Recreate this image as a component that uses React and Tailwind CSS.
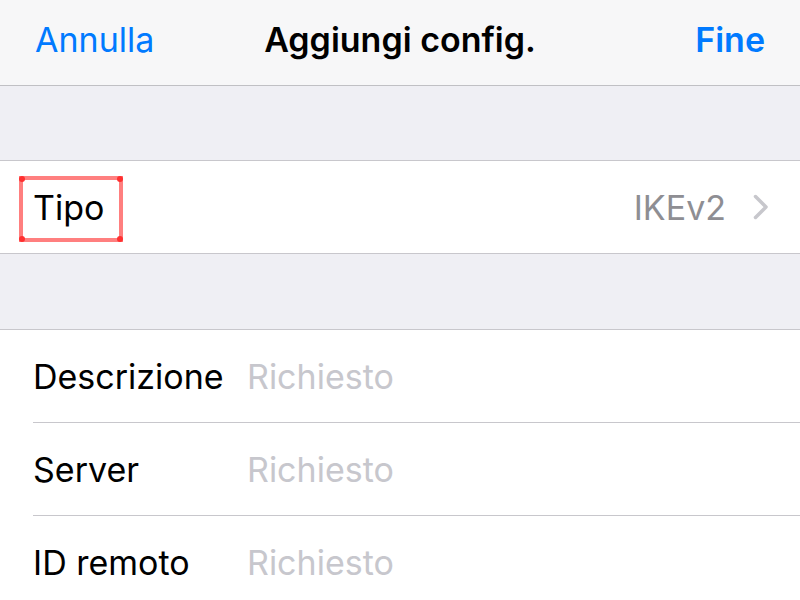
import React from "react";

const font = { fontFamily: "Inter, 'Liberation Sans', sans-serif" };

const Row = ({ label, last }) => (
  <div className="flex h-[93px] items-stretch pl-[33px]">
    <div
      className={
        "flex flex-1 items-center " + (last ? "" : "border-b border-[#c8c7cc]")
      }
    >
      <span className="w-[214px] text-[34px] text-black">{label}</span>
      <span className="text-[34px] text-[#c7c7cd]">Richiesto</span>
    </div>
  </div>
);

const App = () => {
  return (
    <div className="h-[600px] w-[800px] overflow-hidden bg-[#efeff4]" style={font}>
      <div className="flex h-[86px] items-center justify-between border-b border-[#c0c0c4] bg-[#f7f7f8] px-[35px] pb-[6px]">
        <span className="w-[160px] text-[34px] text-[#007aff]">Annulla</span>
        <span className="text-[34px] font-semibold text-black">Aggiungi config.</span>
        <span className="w-[160px] text-right text-[34px] font-semibold text-[#007aff]">
          Fine
        </span>
      </div>

      <div className="h-[75px] border-b border-[#c8c7cc]" />

      <div className="relative flex h-[93px] items-center justify-between border-b border-[#c8c7cc] bg-white pl-[33px] pr-[31px]">
        <span className="text-[34px] text-black">Tipo</span>
        <div className="flex items-center gap-[27px]">
          <span className="text-[34px] text-[#8e8e93]">IKEv2</span>
          <svg width="16" height="26" viewBox="0 0 16 26" fill="none">
            <path
              d="M2.5 2.5 L13 13 L2.5 23.5"
              stroke="#c7c7cc"
              strokeWidth="3.5"
              strokeLinecap="round"
              strokeLinejoin="round"
            />
          </svg>
        </div>
        <div className="pointer-events-none absolute left-[19px] top-[15px] h-[66px] w-[104px] border-4 border-[#ff7f7f]">
          <div className="absolute -left-[4px] -top-[4px] h-[6px] w-[6px] rounded-full bg-[#ff3030]" />
          <div className="absolute -right-[4px] -top-[4px] h-[6px] w-[6px] rounded-full bg-[#ff3030]" />
          <div className="absolute -bottom-[4px] -left-[4px] h-[6px] w-[6px] rounded-full bg-[#ff3030]" />
          <div className="absolute -bottom-[4px] -right-[4px] h-[6px] w-[6px] rounded-full bg-[#ff3030]" />
        </div>
      </div>

      <div className="h-[76px] border-b border-[#c8c7cc]" />

      <div className="bg-white">
        <Row label="Descrizione" />
        <Row label="Server" />
        <Row label="ID remoto" last />
      </div>
    </div>
  );
};

export default App;
